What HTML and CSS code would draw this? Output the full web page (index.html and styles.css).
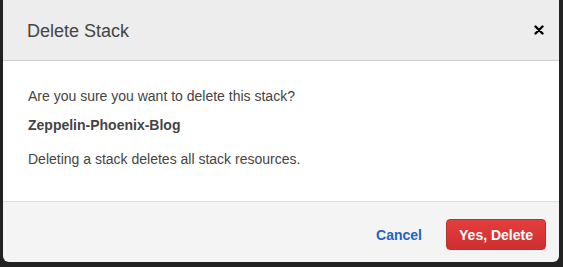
FILE: index.html
```html
<!DOCTYPE html>
<html lang="en">

<head>
    <meta charset="UTF-8">
    <title>Delete Stack</title>
    <link rel="stylesheet" href="styles.css">
</head>

<body>
    <div class="overlay">
        <div class="modal">
            <header class="modal-header">
                <h1 class="modal-title">Delete Stack</h1>
                <button class="close-btn" aria-label="Close">
                    <svg width="10" height="10" viewBox="0 0 10 10">
                        <path d="M1.5 1.5 L8.5 8.5 M8.5 1.5 L1.5 8.5" stroke="#000" stroke-width="2.4" stroke-linecap="round" />
                    </svg>
                </button>
            </header>
            <div class="modal-body">
                <p class="question">Are you sure you want to delete this stack?</p>
                <p class="stack-name">Zeppelin-Phoenix-Blog</p>
                <p class="note">Deleting a stack deletes all stack resources.</p>
            </div>
            <footer class="modal-footer">
                <a class="cancel-link" href="#">Cancel</a>
                <button class="delete-btn">Yes, Delete</button>
            </footer>
        </div>
    </div>
</body>

</html>
```

FILE: styles.css
```css
* {
    margin: 0;
    padding: 0;
    box-sizing: border-box;
}

html,
body {
    height: 100%;
}

body {
    background-color: #222;
    font-family: 'Liberation Sans', Arial, sans-serif;
    color: #444;
}

.overlay {
    padding: 0 4px 0 3px;
}

.modal {
    width: 556px;
    height: 262px;
    border-radius: 0 0 6px 6px;
    overflow: hidden;
    display: flex;
    flex-direction: column;
}

.modal-header {
    height: 61px;
    background-color: #ededed;
    border-bottom: 1px solid #cfcfcf;
    display: flex;
    align-items: center;
    justify-content: space-between;
    padding: 0 15px 0 24px;
}

.modal-title {
    font-size: 18px;
    font-weight: 400;
    color: #444;
    margin-top: 2px;
}

.close-btn {
    border: none;
    background: none;
    width: 10px;
    height: 10px;
    display: flex;
}

.modal-body {
    height: 141px;
    background-color: #fff;
    padding: 25px 25px 0;
    font-size: 14px;
    border-bottom: 1px solid #dcdcdc;
}

.question {
    line-height: 20px;
}

.stack-name {
    font-weight: 700;
    line-height: 20px;
    margin-top: 9px;
}

.note {
    line-height: 20px;
    margin-top: 14px;
}

.modal-footer {
    flex: 1;
    background-color: #f4f4f4;
    display: flex;
    align-items: center;
    justify-content: flex-end;
    padding: 5px 13px 0 0;
}

.cancel-link {
    font-size: 14px;
    font-weight: 700;
    color: #1f64bf;
    text-decoration: none;
    margin-right: 24px;
}

.delete-btn {
    width: 100px;
    height: 31px;
    border: 1px solid #c62d2d;
    border-radius: 4px;
    background: linear-gradient(#e33e3e, #cf2f2f);
    color: #fff;
    font-family: 'Liberation Sans', Arial, sans-serif;
    font-size: 14px;
    font-weight: 700;
}
```
